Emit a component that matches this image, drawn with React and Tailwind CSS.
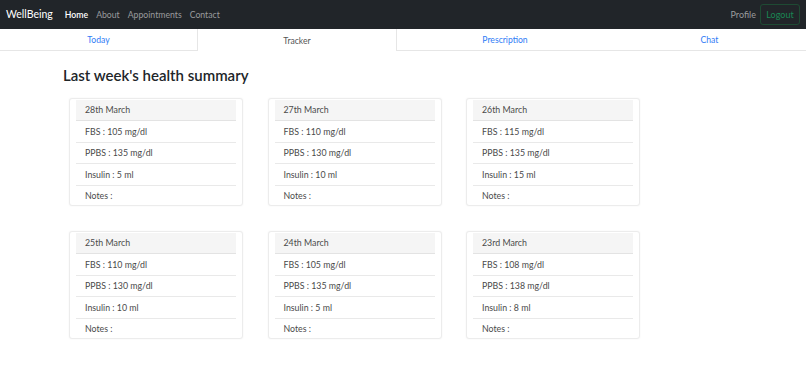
import React from 'react';

const font = { fontFamily: 'Lato, "Noto Sans", sans-serif' };

const records = [
  { date: '28th March', fbs: 105, ppbs: 135, insulin: 5 },
  { date: '27th March', fbs: 110, ppbs: 130, insulin: 10 },
  { date: '26th March', fbs: 115, ppbs: 135, insulin: 15 },
  { date: '25th March', fbs: 110, ppbs: 130, insulin: 10 },
  { date: '24th March', fbs: 105, ppbs: 135, insulin: 5 },
  { date: '23rd March', fbs: 108, ppbs: 138, insulin: 8 },
];

const tabs = [
  { label: 'Today', width: 'w-[197px]' },
  { label: 'Tracker', width: 'w-[200px]' },
  { label: 'Prescription', width: 'w-[216px]' },
  { label: 'Chat', width: 'w-[193px]' },
];

const DayCard = ({ record }) => (
  <div className="w-[174px] h-[108px] bg-white border border-[#ececec] rounded-[3px] shadow-[0_0_2px_rgba(0,0,0,0.06)] px-[6px] pt-px">
    <div className="h-[21px] bg-[#f5f5f5] border-b border-[#e3e3e3] pl-[9px] flex items-center text-[8.8px] text-[#4a4a4a]">
      {record.date}
    </div>
    <div className="h-[21.5px] border-b border-[#e9e9e9] pl-[9px] flex items-center text-[8.8px] text-[#4a4a4a]">
      FBS : {record.fbs} mg/dl
    </div>
    <div className="h-[21.5px] border-b border-[#e9e9e9] pl-[9px] flex items-center text-[8.8px] text-[#4a4a4a]">
      PPBS : {record.ppbs} mg/dl
    </div>
    <div className="h-[21.5px] border-b border-[#e9e9e9] pl-[9px] flex items-center text-[8.8px] text-[#4a4a4a]">
      Insulin : {record.insulin} ml
    </div>
    <div className="h-[21px] pl-[9px] flex items-center text-[8.8px] text-[#4a4a4a]">Notes :</div>
  </div>
);

const App = () => {
  return (
    <div className="w-[806px] h-[387px] bg-white" style={font}>
      <nav className="h-[29px] bg-[#212529] flex items-center pl-[6px] pr-[6px]">
        <span className="text-white text-[10.5px] mr-[12px]">WellBeing</span>
        <div className="flex items-center gap-[8px] text-[8.7px]">
          <span className="text-white font-semibold">Home</span>
          <span className="text-[#9a9b9d]">About</span>
          <span className="text-[#9a9b9d]">Appointments</span>
          <span className="text-[#9a9b9d]">Contact</span>
        </div>
        <div className="ml-auto flex items-center gap-[4px] text-[9px]">
          <span className="text-[#9a9b9d]">Profile</span>
          <span className="h-[21px] w-[40px] flex items-center justify-center border border-[#1e4a33] rounded-[3px] text-[#198754]">
            Logout
          </span>
        </div>
      </nav>

      <div className="flex h-[22px]">
        {tabs.map((tab) => (
          <div
            key={tab.label}
            className={
              tab.label === 'Tracker'
                ? `${tab.width} pt-[2px] flex items-center justify-center text-[8.6px] text-[#555] border-x border-[#e6e6e6]`
                : `${tab.width} pt-[2px] flex items-center justify-center text-[8.6px] text-[#2f7cf6] border-b border-[#e6e6e6]`
            }
          >
            {tab.label}
          </div>
        ))}
      </div>

      <h2 className="ml-[63px] mt-[14px] text-[15px] font-semibold text-[#212529] leading-[20px]">
        Last week's health summary
      </h2>

      <div className="ml-[69px] mt-[13px] grid grid-cols-[repeat(3,174px)] gap-x-[24.5px] gap-y-[25px]">
        {records.map((r) => (
          <DayCard key={r.date} record={r} />
        ))}
      </div>
    </div>
  );
};

export default App;
